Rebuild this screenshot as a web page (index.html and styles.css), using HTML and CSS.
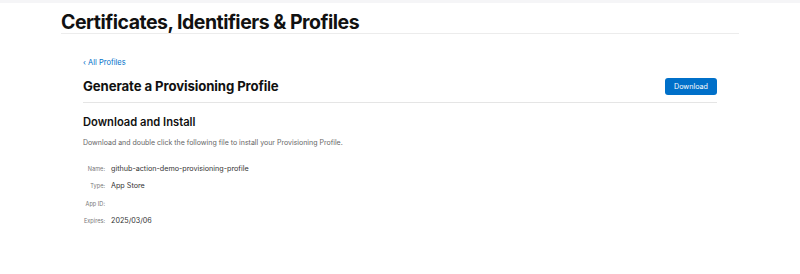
FILE: index.html
```html
<!DOCTYPE html>
<html>
<head>
<meta charset="utf-8">
<link rel="stylesheet" href="styles.css">
</head>
<body>
<div class="topbar"></div>
<div class="page">
  <h1 class="page-title">Certificates, Identifiers &amp; Profiles</h1>
  <div class="content">
    <a class="back" href="#">‹ All Profiles</a>
    <div class="head-row">
      <h2 class="section-title">Generate a Provisioning Profile</h2>
      <button class="btn">Download</button>
    </div>
    <h3 class="sub-title">Download and Install</h3>
    <p class="desc">Download and double click the following file to install your Provisioning Profile.</p>
    <dl class="details">
      <dt>Name:</dt><dd>github-action-demo-provisioning-profile</dd>
      <dt>Type:</dt><dd>App Store</dd>
      <dt>App ID:</dt><dd class="redacted"></dd>
      <dt>Expires:</dt><dd>2025/03/06</dd>
    </dl>
  </div>
</div>
</body>
</html>
```
FILE: styles.css
```css
* { box-sizing: border-box; }
html, body { margin: 0; padding: 0; background: #fff; }
body {
  font-family: Inter, "Noto Sans", "Liberation Sans", sans-serif;
  color: #1d1d1f;
}
.topbar { height: 3px; background: #f5f5f7; }
.page { width: 678px; margin-left: 61px; }
.page-title {
  margin: 0;
  padding-top: 9px;
  padding-bottom: 1px;
  font-size: 19.5px;
  line-height: 20px;
  font-weight: 700;
  letter-spacing: -0.5px;
  color: #111;
  border-bottom: 1px solid #ececec;
}
.content { padding: 0 22px; }
.back {
  display: block;
  margin-top: 24px;
  font-size: 7.5px;
  line-height: 10px;
  color: #0070c9;
  text-decoration: none;
}
.head-row {
  display: flex;
  justify-content: space-between;
  align-items: center;
  margin-top: 9px;
  padding-bottom: 7px;
  border-bottom: 1px solid #e5e5e5;
}
.section-title {
  margin: 0;
  font-size: 13.2px;
  line-height: 18px;
  font-weight: 700;
  letter-spacing: -0.1px;
  color: #111;
}
.btn {
  width: 52px;
  height: 17px;
  border: none;
  border-radius: 3px;
  background: #0070c9;
  color: #fff;
  font-family: inherit;
  font-size: 7.2px;
  padding: 0;
}
.sub-title {
  margin: 12px 0 0;
  font-size: 11.2px;
  line-height: 14px;
  font-weight: 600;
  color: #111;
}
.desc {
  margin: 9px 0 0;
  font-size: 7px;
  line-height: 10px;
  color: #666;
}
.details {
  display: grid;
  grid-template-columns: 22px auto;
  column-gap: 6px;
  row-gap: 7.4px;
  margin: 16px 0 0;
  align-items: center;
}
.details dt {
  font-size: 5.6px;
  line-height: 10px;
  color: #777;
  white-space: nowrap;
  justify-self: end;
}
.details dd {
  margin: 0;
  font-size: 7.2px;
  line-height: 10px;
  color: #333;
  min-height: 10px;
}
```
